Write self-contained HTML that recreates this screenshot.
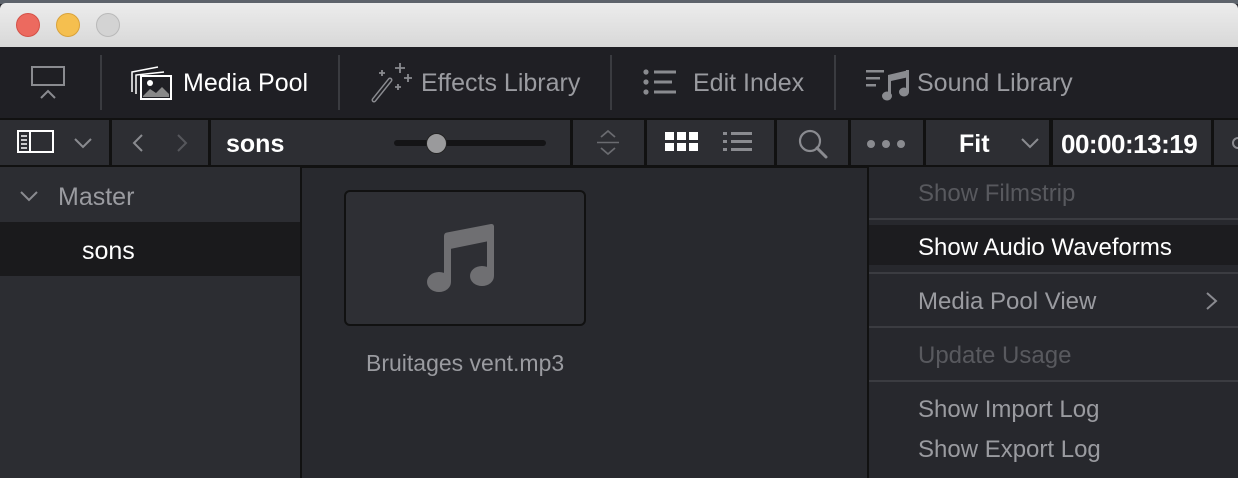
<!DOCTYPE html><html style="overflow:hidden;height:478px"><head><style>
*{margin:0;padding:0;box-sizing:border-box}
body{width:1238px;height:478px;overflow:hidden;background:#28292e;font-family:"Liberation Sans",sans-serif;position:relative}
.a{position:absolute}
.t{position:absolute;white-space:nowrap}
</style></head><body>
<div class="a" style="left:0;top:0;width:1238px;height:4px;background:#5d636b"></div>
<div class="a" style="left:0;top:3px;width:1238px;height:44px;background:linear-gradient(#ececec,#d8d8d8);border-radius:6px 6px 0 0"></div>
<div class="a" style="left:16px;top:13px;width:24px;height:24px;border-radius:50%;background:#ec6a5f;border:1px solid #d45147"></div>
<div class="a" style="left:56px;top:13px;width:24px;height:24px;border-radius:50%;background:#f5bf4f;border:1px solid #d9a23a"></div>
<div class="a" style="left:96px;top:13px;width:24px;height:24px;border-radius:50%;background:#d3d3d3;border:1px solid #b9b9b9"></div>
<!-- toolbar -->
<div class="a" style="left:0;top:47px;width:1238px;height:71px;background:#1f1f24"></div>
<div class="a" style="left:100px;top:55px;width:2px;height:55px;background:#3a3b40"></div>
<div class="a" style="left:338px;top:55px;width:2px;height:55px;background:#3a3b40"></div>
<div class="a" style="left:610px;top:55px;width:2px;height:55px;background:#3a3b40"></div>
<div class="a" style="left:834px;top:55px;width:2px;height:55px;background:#3a3b40"></div>
<svg class="a" style="left:28px;top:64px" width="40" height="38"><rect x="4" y="3" width="32" height="18" fill="none" stroke="#8a8b90" stroke-width="2"/><path d="M13 34 L20 27 L27 34" fill="none" stroke="#8a8b90" stroke-width="2"/></svg>
<svg class="a" style="left:128px;top:64px" width="46" height="38"><path d="M4 28 V8 L30 3" fill="none" stroke="#fff" stroke-width="1.5"/><path d="M8 30 V11 L36 8" fill="none" stroke="#fff" stroke-width="1.5"/><rect x="13" y="12" width="30" height="23" fill="#1f1f24" stroke="#fff" stroke-width="2"/><circle cx="22" cy="19" r="3" fill="#fff"/><path d="M15 32 L22 25 L28 29 L34 23 L41 30 V33 H15Z" fill="#888"/></svg>
<div class="t" style="left:183px;top:69px;font-size:25px;color:#fff">Media Pool</div>
<svg class="a" style="left:370px;top:60px" width="46" height="44"><path d="M4 40 L20 20" stroke="#8a8b90" stroke-width="5" stroke-linecap="round"/><path d="M4 40 L20 20" stroke="#1f1f24" stroke-width="2" stroke-linecap="round"/><path d="M30 3v10M25 8h10M38 14v8M34 18h8M28 24v6M25 27h6M12 10v6M9 13h6" stroke="#8a8b90" stroke-width="1.8"/></svg>
<div class="t" style="left:421px;top:69px;font-size:25px;color:#9a9ba0">Effects Library</div>
<svg class="a" style="left:642px;top:68px" width="38" height="30"><g fill="#8a8b90"><circle cx="4" cy="4" r="2.6"/><circle cx="4" cy="14" r="2.6"/><circle cx="4" cy="24" r="2.6"/><rect x="12" y="2.5" width="22" height="3"/><rect x="12" y="12.5" width="18" height="3"/><rect x="12" y="22.5" width="22" height="3"/></g></svg>
<div class="t" style="left:693px;top:69px;font-size:25px;color:#9a9ba0">Edit Index</div>
<svg class="a" style="left:864px;top:66px" width="48" height="36"><g fill="#8a8b90"><rect x="2" y="4" width="18" height="2.5"/><rect x="2" y="11" width="14" height="2.5"/><rect x="2" y="18" width="10" height="2.5"/><path d="M24 9 L45 4 V11 L27 15Z"/><rect x="24" y="9" width="3" height="21"/><rect x="42" y="4" width="3" height="22"/><ellipse cx="23" cy="30" rx="5" ry="4.5"/><ellipse cx="40" cy="26" rx="5" ry="4.5"/></g></svg>
<div class="t" style="left:917px;top:69px;font-size:25px;color:#9a9ba0">Sound Library</div>
<!-- second bar -->
<div class="a" style="left:0;top:118px;width:1238px;height:50px;background:#111"></div>
<div class="a" style="left:0;top:120px;width:109px;height:45px;background:#2d2e33"></div>
<div class="a" style="left:112px;top:120px;width:96px;height:45px;background:#2d2e33"></div>
<div class="a" style="left:211px;top:120px;width:359px;height:45px;background:#2d2e33"></div>
<div class="a" style="left:573px;top:120px;width:71px;height:45px;background:#2d2e33"></div>
<div class="a" style="left:647px;top:120px;width:127px;height:45px;background:#2d2e33"></div>
<div class="a" style="left:777px;top:120px;width:71px;height:45px;background:#2d2e33"></div>
<div class="a" style="left:851px;top:120px;width:72px;height:45px;background:#2d2e33"></div>
<div class="a" style="left:926px;top:120px;width:123px;height:45px;background:#2d2e33"></div>
<div class="a" style="left:1053px;top:120px;width:158px;height:45px;background:#2d2e33"></div>
<div class="a" style="left:1214px;top:120px;width:24px;height:45px;background:#2d2e33;overflow:hidden"><div class="a" style="left:18px;top:17px;width:12px;height:12px;border-radius:50%;border:2px solid #8a8b90"></div></div>
<svg class="a" style="left:17px;top:130px" width="38" height="24"><rect x="1" y="1" width="35" height="21" fill="none" stroke="#fff" stroke-width="2"/><line x1="13" y1="1" x2="13" y2="22" stroke="#fff" stroke-width="2"/><g stroke="#fff" stroke-width="1.5"><line x1="4" y1="6" x2="10" y2="6"/><line x1="4" y1="10" x2="10" y2="10"/><line x1="4" y1="14" x2="10" y2="14"/><line x1="4" y1="18" x2="10" y2="18"/></g></svg>
<svg class="a" style="left:72px;top:136px" width="22" height="14"><path d="M3 3 L11 11 L19 3" fill="none" stroke="#8a8b90" stroke-width="2"/></svg>
<svg class="a" style="left:130px;top:132px" width="16" height="22"><path d="M12 3 L4 11 L12 19" fill="none" stroke="#8a8b90" stroke-width="2"/></svg>
<svg class="a" style="left:174px;top:132px" width="16" height="22"><path d="M4 3 L12 11 L4 19" fill="none" stroke="#56575c" stroke-width="2"/></svg>
<div class="t" style="left:226px;top:130px;font-size:25px;font-weight:bold;color:#fff">sons</div>
<div class="a" style="left:394px;top:140px;width:152px;height:6px;border-radius:3px;background:#141416"></div>
<div class="a" style="left:426px;top:133px;width:21px;height:21px;border-radius:50%;background:#9a9a9c;border:1px solid #222"></div>
<svg class="a" style="left:594px;top:128px" width="28" height="30"><path d="M7 9 L14 3 L21 9M7 20 L14 26 L21 20" fill="none" stroke="#6a6b70" stroke-width="1.8"/><line x1="3" y1="14.5" x2="25" y2="14.5" stroke="#6a6b70" stroke-width="1.5"/></svg>
<svg class="a" style="left:665px;top:132px" width="34" height="22"><g fill="#fff"><rect x="0" y="0" width="9" height="8"/><rect x="12" y="0" width="9" height="8"/><rect x="24" y="0" width="9" height="8"/><rect x="0" y="11" width="9" height="8"/><rect x="12" y="11" width="9" height="8"/><rect x="24" y="11" width="9" height="8"/></g></svg>
<svg class="a" style="left:723px;top:131px" width="32" height="24"><g fill="#8a8b90"><rect x="0" y="1" width="4" height="3"/><rect x="0" y="9" width="4" height="3"/><rect x="0" y="17" width="4" height="3"/><rect x="8" y="1" width="21" height="3"/><rect x="8" y="9" width="21" height="3"/><rect x="8" y="17" width="21" height="3"/></g></svg>
<svg class="a" style="left:797px;top:128px" width="34" height="32"><circle cx="13" cy="13" r="10" fill="none" stroke="#8a8b90" stroke-width="2.2"/><line x1="20" y1="20" x2="29" y2="29" stroke="#8a8b90" stroke-width="3" stroke-linecap="round"/></svg>
<svg class="a" style="left:866px;top:138px" width="40" height="12"><g fill="#8a8b90"><circle cx="5" cy="6" r="4"/><circle cx="20" cy="6" r="4"/><circle cx="35" cy="6" r="4"/></g></svg>
<div class="t" style="left:959px;top:130px;font-size:25px;font-weight:bold;color:#fff">Fit</div>
<svg class="a" style="left:1019px;top:136px" width="22" height="14"><path d="M3 3 L11 11 L19 3" fill="none" stroke="#8a8b90" stroke-width="2"/></svg>
<div class="t" style="left:1061px;top:129px;font-size:26px;font-weight:bold;color:#fff;letter-spacing:-0.5px">00:00:13:19</div>
<!-- content -->
<div class="a" style="left:0;top:167px;width:300px;height:311px;background:#2c2d32"></div>
<div class="a" style="left:300px;top:167px;width:2px;height:311px;background:#111"></div>
<svg class="a" style="left:18px;top:189px" width="22" height="14"><path d="M3 3 L11 11 L19 3" fill="none" stroke="#8a8b90" stroke-width="2"/></svg>
<div class="t" style="left:58px;top:183px;font-size:25px;color:#9a9ba0">Master</div>
<div class="a" style="left:0;top:222px;width:300px;height:54px;background:#1a1a1c"></div>
<div class="t" style="left:82px;top:237px;font-size:25px;color:#fff">sons</div>
<div class="a" style="left:344px;top:190px;width:242px;height:136px;border-radius:6px;background:#2e2f34;border:2px solid #111"></div>
<svg class="a" style="left:420px;top:220px" width="80" height="76"><g fill="#6f6f72"><path d="M24 16 Q24 13 27 12.5 L71 4 Q74 3.5 74 7 V20 L30 29Z"/><rect x="24" y="16" width="7" height="46"/><rect x="67" y="6" width="7" height="50"/><ellipse cx="19" cy="62" rx="12" ry="10"/><ellipse cx="62" cy="56" rx="12" ry="10"/></g></svg>
<div class="t" style="left:366px;top:350px;font-size:23px;color:#9a9ba0">Bruitages vent.mp3</div>
<!-- menu -->
<div class="a" style="left:867px;top:165px;width:371px;height:313px;background:#27282d;border-left:2px solid #111;border-top:2px solid #111"></div>
<div class="a" style="left:869px;top:218px;width:369px;height:2px;background:#3b3c41"></div>
<div class="a" style="left:869px;top:225px;width:369px;height:40px;background:#1c1c1f"></div>
<div class="a" style="left:869px;top:272px;width:369px;height:2px;background:#3b3c41"></div>
<div class="a" style="left:869px;top:326px;width:369px;height:2px;background:#3b3c41"></div>
<div class="a" style="left:869px;top:380px;width:369px;height:2px;background:#3b3c41"></div>
<div class="t" style="left:918px;top:180px;font-size:24px;color:#58595e">Show Filmstrip</div>
<div class="t" style="left:918px;top:234px;font-size:24px;color:#fff">Show Audio Waveforms</div>
<div class="t" style="left:918px;top:288px;font-size:24px;color:#9a9ba0">Media Pool View</div>
<svg class="a" style="left:1204px;top:290px" width="16" height="22"><path d="M3 3 L12 11 L3 19" fill="none" stroke="#8a8b90" stroke-width="2"/></svg>
<div class="t" style="left:918px;top:342px;font-size:24px;color:#58595e">Update Usage</div>
<div class="t" style="left:918px;top:396px;font-size:24px;color:#9a9ba0">Show Import Log</div>
<div class="t" style="left:918px;top:436px;font-size:24px;color:#9a9ba0">Show Export Log</div>
</body></html>
